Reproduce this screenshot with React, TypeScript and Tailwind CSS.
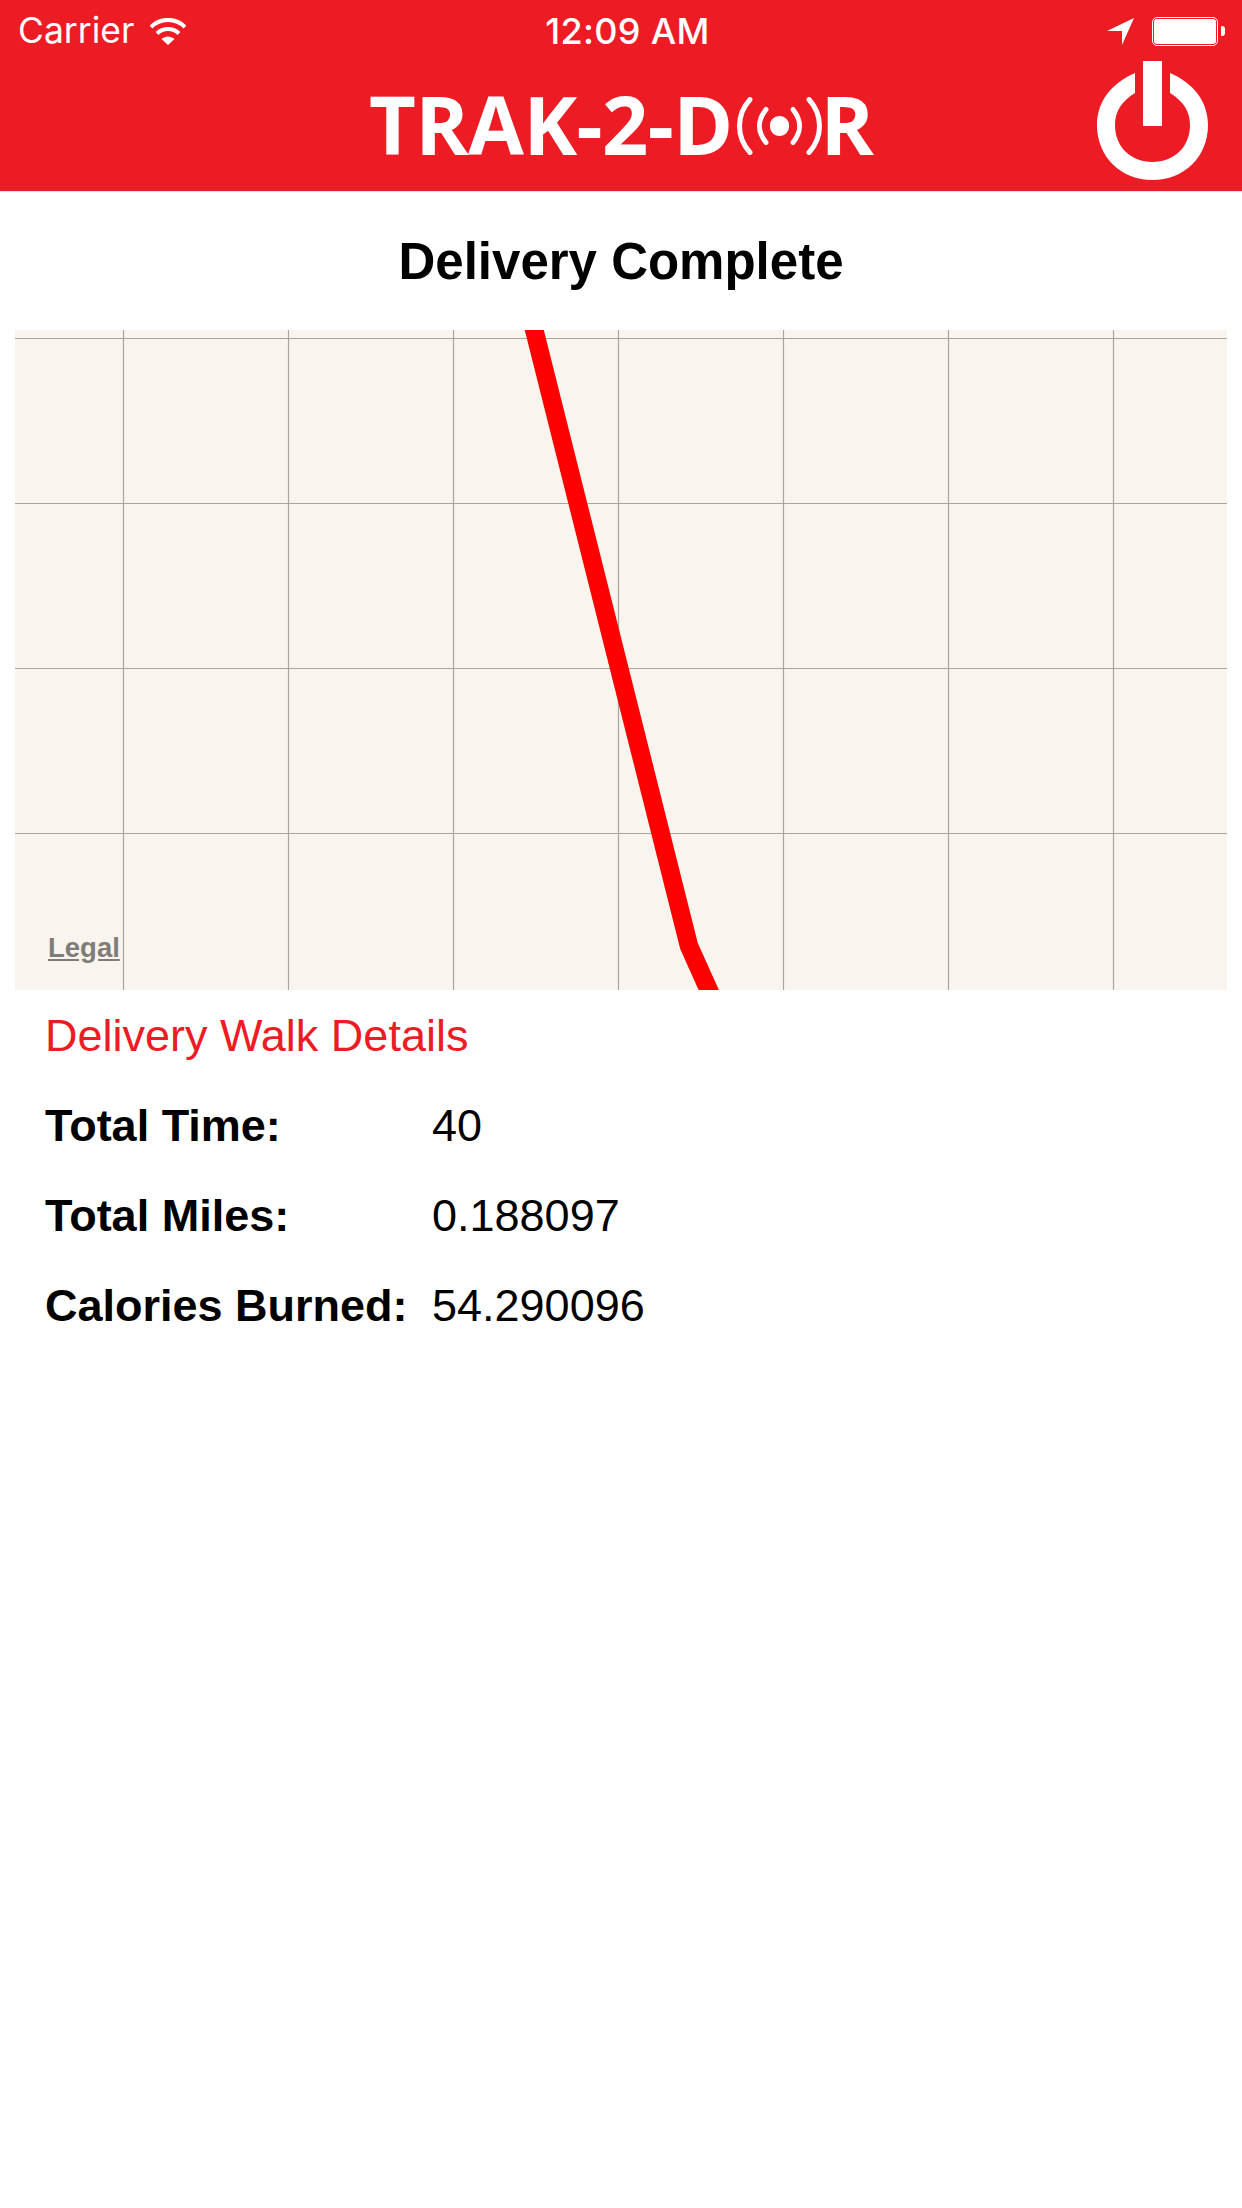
const verticals = [123.5, 288.5, 453.5, 618.5, 783.5, 948.5, 1113.5];
const horizontals = [338.5, 503.5, 668.5, 833.5];

function WifiIcon() {
  return (
    <svg width="36" height="27" viewBox="0 0 36 27" fill="none" className="ml-[16px]">
      <path d="M1 9C10 -0.500 26 -0.500 35 9" stroke="white" strokeWidth="4" />
      <path d="M7 15.500C13 9.500 23 9.500 29 15.500" stroke="white" strokeWidth="4" />
      <path d="M11.500 21C15 17.500 21 17.500 24.500 21L18 27Z" fill="white" />
    </svg>
  );
}

function StatusBar() {
  return (
    <div className="flex h-[62px] items-center justify-between pl-[18px] pr-[17px] font-['Inter',sans-serif] text-[36px] leading-none text-white">
      <div className="flex w-[312px] items-center">
        <span className="text-[35.500px]">Carrier</span>
        <WifiIcon />
      </div>
      <span className="font-medium tracking-[0.3px]">12:09 AM</span>
      <div className="flex w-[300px] items-center justify-end">
        <svg width="27" height="27" viewBox="0 0 27 27" className="mr-[18px]">
          <path d="M0 13L27 0L15 27V13Z" fill="white" />
        </svg>
        <div className="rounded-[5px] border border-white p-[1px]">
          <div className="h-[25px] w-[62px] rounded-[3px] bg-white" />
        </div>
        <div className="ml-[3px] h-[10px] w-[4px] rounded-r-[3px] bg-white" />
      </div>
    </div>
  );
}

function SignalO() {
  return (
    <svg width="85" height="58" viewBox="0 0 85 58" fill="none" stroke="white" strokeWidth="5" strokeLinecap="round" className="ml-[4px] mr-[-1px] mt-[18px] shrink-0">
      <path d="M13 2.500C-1 18 -1 40 13 55.500" />
      <path d="M29 12.500C20 24 20 34 29 45.500" />
      <path d="M56 12.500C65 24 65 34 56 45.500" />
      <path d="M72 2.500C86 18 86 40 72 55.500" />
      <rect x="34" y="20" width="17" height="18" rx="8" fill="white" strokeWidth="2" />
    </svg>
  );
}

function PowerIcon() {
  return (
    <svg width="111" height="119" viewBox="0 0 111 119" className="absolute right-[34px] top-[-1px]">
      <path d="M38 12C15 22 0 40 0 64C0 96 24 119 55.500 119C87 119 111 96 111 64C111 40 96 22 73 12V32C86 40 93 50 93 64C93 86 77 101 55.500 101C34 101 18 86 18 64C18 50 25 40 38 32Z" fill="white" />
      <rect x="46" y="0" width="19" height="65" fill="white" />
    </svg>
  );
}

function Header() {
  return (
    <header className="h-[192px] border-b border-[#e8e2de] bg-[#ed1c24]">
      <StatusBar />
      <div className="relative flex h-[129px] items-start justify-center pl-[1px] pt-[17px] font-['Open_Sans',sans-serif] text-[81px] font-bold leading-[90px] text-white">
        <span className="tracking-[-0.6px]">TRAK-2-D</span>
        <SignalO />
        <span>R</span>
        <PowerIcon />
      </div>
    </header>
  );
}

function MapView() {
  return (
    <div className="relative mx-[15px] h-[660px] overflow-hidden bg-[#f9f5ee]">
      <svg width="1212" height="660" viewBox="15 330 1212 660" className="block">
        {verticals.map((x) => (
          <line key={x} x1={x} x2={x} y1={330} y2={990} stroke="#a9a69f" strokeWidth="1.200" />
        ))}
        {horizontals.map((y) => (
          <line key={y} x1={15} x2={1227} y1={y} y2={y} stroke="#a9a69f" strokeWidth="1.200" />
        ))}
        <polyline points="533,325 689,946 711,995" fill="none" stroke="#ff0000" strokeWidth="18.500" strokeLinejoin="round" />
      </svg>
      <span className="absolute left-[33px] top-[600px] font-['Liberation_Sans',sans-serif] text-[27.500px] font-bold leading-[36px] text-[#7f7d79] underline">
        Legal
      </span>
    </div>
  );
}

function DetailRow({ label, value }: { label: string; value: string }) {
  return (
    <div className="flex h-[90px] items-center">
      <span className="w-[387px] font-bold">{label}</span>
      <span>{value}</span>
    </div>
  );
}

export default function App() {
  return (
    <div className="min-h-[2208px] bg-white font-['Liberation_Sans',sans-serif] text-black">
      <Header />
      <h1 className="flex h-[138px] items-center justify-center pt-[3px] text-[51px] font-bold">Delivery Complete</h1>
      <MapView />
      <div className="px-[45px] text-[45px]">
        <h2 className="flex h-[91px] items-center text-[#ed1c24]">Delivery Walk Details</h2>
        <DetailRow label="Total Time:" value="40" />
        <DetailRow label="Total Miles:" value="0.188097" />
        <DetailRow label="Calories Burned:" value="54.290096" />
      </div>
    </div>
  );
}
